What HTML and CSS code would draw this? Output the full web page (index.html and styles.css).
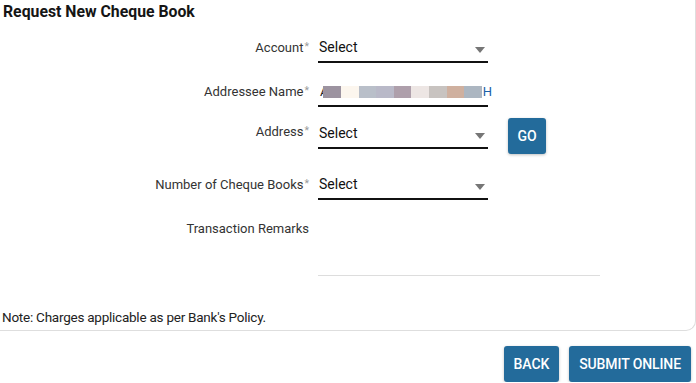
FILE: index.html
```html
<!DOCTYPE html>
<html>
<head>
<meta charset="utf-8">
<link rel="stylesheet" href="styles.css">
</head>
<body>
<div class="card">
  <h1 class="title">Request New Cheque Book</h1>
  <div class="form">
    <div class="row row-1">
      <label class="label">Account<span class="req">*</span></label>
      <div class="field select"><span class="value">Select</span><span class="caret"></span></div>
    </div>
    <div class="row row-2">
      <label class="label">Addressee Name<span class="req">*</span></label>
      <div class="field text"><span class="value masked"><span class="glyph">A</span><span class="blk" style="background:#9c93a0"></span><span class="blk" style="background:#fcf6ee"></span><span class="blk" style="background:#b9bfc9"></span><span class="blk" style="background:#b9b9c8"></span><span class="blk" style="background:#ae9fab"></span><span class="blk" style="background:#ede6e4"></span><span class="blk" style="background:#c8c3c0"></span><span class="blk" style="background:#cfb09f"></span><span class="blk" style="background:#acb6c1"></span><span class="tail">H</span></span></div>
    </div>
    <div class="row row-3">
      <label class="label">Address<span class="req">*</span></label>
      <div class="field select"><span class="value">Select</span><span class="caret"></span></div>
      <button class="btn btn-go">GO</button>
    </div>
    <div class="row row-4">
      <label class="label">Number of Cheque Books<span class="req">*</span></label>
      <div class="field select"><span class="value">Select</span><span class="caret"></span></div>
    </div>
    <div class="row row-5">
      <label class="label">Transaction Remarks</label>
      <div class="field area"></div>
    </div>
  </div>
  <p class="note">Note: Charges applicable as per Bank's Policy.</p>
</div>
<div class="actions">
  <button class="btn">BACK</button>
  <button class="btn">SUBMIT ONLINE</button>
</div>
</body>
</html>
```

FILE: styles.css
```css
html, body {
  margin: 0;
  padding: 0;
  background: #ffffff;
  font-family: Roboto, "Liberation Sans", Arial, sans-serif;
  color: #222;
}

.card {
  border-right: 1px solid #dedede;
  border-bottom: 1px solid #dedede;
  border-bottom-right-radius: 10px;
  padding: 3px 0 0 3px;
  height: 327px;
  box-sizing: content-box;
  display: flex;
  flex-direction: column;
}

.title {
  margin: 0;
  font-size: 15.8px;
  font-weight: 700;
  line-height: 18px;
  color: #151515;
}

.form {
  display: flex;
  flex-direction: column;
  margin-top: 16px;
}

.row {
  display: flex;
  align-items: flex-start;
}

.label {
  width: 306px;
  text-align: right;
  font-size: 13px;
  line-height: 18px;
  color: #333;
  padding-top: 2px;
  box-sizing: border-box;
  flex: none;
}

.req {
  color: #9a9a9a;
  font-size: 10.5px;
  vertical-align: top;
  position: relative;
  top: -1px;
  margin-left: 1px;
}

.field {
  margin-left: 9px;
  width: 170px;
  height: 24px;
  border-bottom: 2px solid #111;
  display: flex;
  align-items: flex-start;
  flex: none;
}

.value {
  font-size: 14px;
  line-height: 18px;
  color: #111;
  padding-left: 1px;
  padding-top: 1px;
}

.caret {
  margin-left: auto;
  margin-right: 3px;
  margin-top: 10px;
  width: 0;
  height: 0;
  border-left: 5px solid transparent;
  border-right: 5px solid transparent;
  border-top: 6px solid #767676;
}

.row-1 { height: 43px; }
.row-2 { height: 38px; }
.row-2 .label { padding-top: 3px; }
.row-2 .field { height: 25px; }
.row-3 { height: 36px; align-items: center; margin-bottom: 20px; }
.row-3 .label { align-self: flex-start; padding-top: 5px; }
.row-4 { height: 38px; }
.row-5 { height: 59px; margin-top: 6px; }

.masked {
  display: flex;
  align-items: center;
  height: 18px;
  margin-top: 2px;
  padding-left: 2px;
}
.glyph {
  display: inline-block;
  color: #222;
  font-size: 13px;
  margin-right: -5px;
}
.blk {
  display: inline-block;
  width: 17.6px;
  height: 12px;
}
.tail {
  color: #1a5fa8;
  font-size: 13px;
  margin-left: 1px;
  display: inline-block;
}

.area {
  width: 282px;
  height: 57px;
  border-bottom: 1px solid #dddddd;
}

.note {
  margin: 32px 0 0 -1px;
  font-size: 13.5px;
  letter-spacing: -0.24px;
  line-height: 16px;
  color: #222;
}

.btn {
  font-family: Roboto, "Liberation Sans", Arial, sans-serif;
  background: #236b9b;
  color: #fff;
  border: none;
  border-radius: 3px;
  font-size: 14px;
  font-weight: 500;
  letter-spacing: -0.1px;
  padding: 0 10px;
  height: 36px;
  box-shadow: 0 1px 3px rgba(0,0,0,0.25);
}

.btn-go {
  margin-left: 20px;
  width: 38px;
  height: 36px;
  padding: 0;
  font-size: 14px;
}

.actions {
  display: flex;
  justify-content: flex-end;
  gap: 10px;
  padding: 15px 5px 0 0;
}
```
